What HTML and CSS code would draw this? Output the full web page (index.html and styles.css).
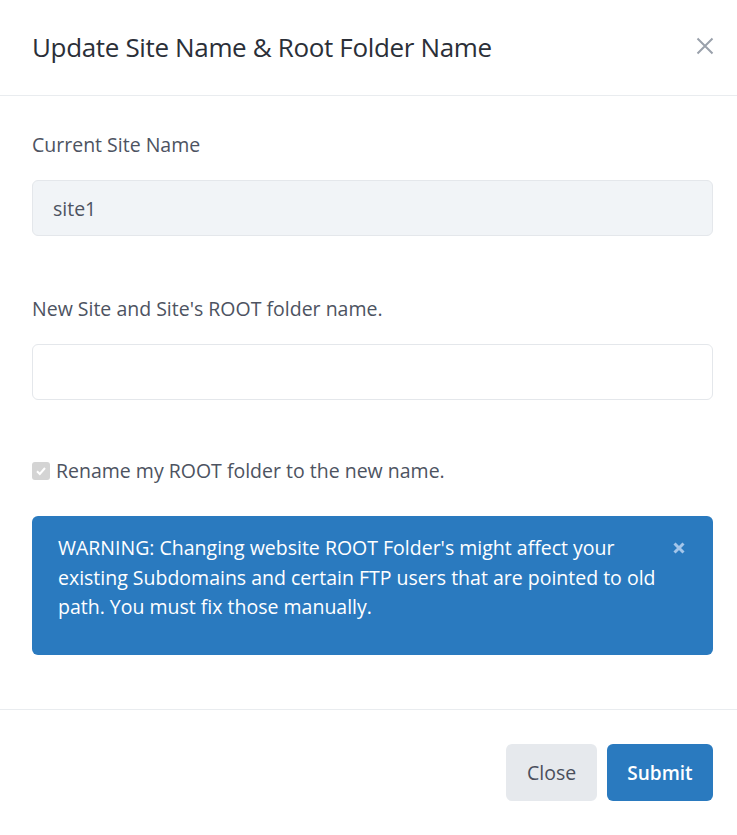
FILE: index.html
```html
<!DOCTYPE html>
<html>
<head>
<meta charset="utf-8">
<link rel="stylesheet" href="styles.css">
</head>
<body>
<div class="modal">
  <div class="modal-header">
    <h1 class="title">Update Site Name &amp; Root Folder Name</h1>
    <button class="close-x" aria-label="Close">
      <svg width="18" height="18" viewBox="0 0 18 18"><path d="M1.5 1.5L16.5 16.5M16.5 1.5L1.5 16.5" stroke="#9aa1ab" stroke-width="2" fill="none"/></svg>
    </button>
  </div>
  <div class="modal-body">
    <div class="group">
      <label class="label">Current Site Name</label>
      <div class="input readonly">site1</div>
    </div>
    <div class="group">
      <label class="label">New Site and Site's ROOT folder name.</label>
      <div class="input"></div>
    </div>
    <div class="check-row">
      <span class="checkbox">
        <svg width="12" height="12" viewBox="0 0 12 12"><path d="M2 6.2L4.8 9L10 3" stroke="#ffffff" stroke-width="2" fill="none"/></svg>
      </span>
      <span class="check-label">Rename my ROOT folder to the new name.</span>
    </div>
    <div class="alert">
      <p class="alert-text">WARNING: Changing website ROOT Folder's might affect your existing Subdomains and certain FTP users that are pointed to old path. You must fix those manually.</p>
      <span class="alert-close" aria-label="Dismiss">
        <svg width="12" height="12" viewBox="0 0 12 12"><path d="M1.5 1.5L10.5 10.5M10.5 1.5L1.5 10.5" stroke="#a4c6ea" stroke-width="3" fill="none"/></svg>
      </span>
    </div>
  </div>
  <div class="modal-footer">
    <button class="btn btn-light">Close</button>
    <button class="btn btn-primary">Submit</button>
  </div>
</div>
</body>
</html>
```
FILE: styles.css
```css
* { box-sizing: border-box; }
html, body { margin: 0; padding: 0; background: #ffffff; }
body { font-family: "Open Sans", "Liberation Sans", sans-serif; color: #4a4f5c; }
.modal { width: 737px; }
.modal-header {
  height: 96px;
  padding: 0 23px 0 32px;
  display: flex;
  align-items: center;
  justify-content: space-between;
  border-bottom: 1px solid #e9ecef;
}
.title { margin: 0; font-weight: 400; font-size: 26px; line-height: 34px; color: #2b2f38; letter-spacing: -0.35px; margin-top: -2px; }
.close-x { border: 0; background: none; padding: 0; width: 18px; height: 18px; margin-top: -3px; display: flex; }
.modal-body { padding: 35px 24px 0 32px; }
.group { margin-bottom: 59px; }
.label { display: block; font-size: 19.5px; line-height: 28px; color: #4d5361; margin-bottom: 21px; }
.input {
  height: 56px;
  border: 1px solid #e4e7eb;
  border-radius: 6px;
  padding: 0 20px;
  display: flex;
  align-items: center;
  font-size: 19.5px;
  color: #4d5361;
  background: #fff;
}
.input.readonly { background: #f1f4f7; }
.check-row { display: flex; align-items: center; gap: 6px; height: 28px; margin-top: -2px; }
.checkbox {
  width: 18px; height: 18px; border-radius: 3px; background: #d4d4d4;
  display: flex; align-items: center; justify-content: center;
}
.check-label { font-size: 19.5px; line-height: 28px; color: #4d5361; }
.alert {
  margin-top: 31px;
  background: #2a7abf;
  border-radius: 6px;
  height: 139px;
  padding: 17px 28px 0 26px;
  display: flex;
  justify-content: space-between;
  align-items: flex-start;
}
.alert-text { margin: 0; color: #ffffff; font-size: 19.5px; line-height: 29.5px; width: 600px; }
.alert-close { display: flex; margin-top: 9px; }
.modal-footer {
  margin-top: 54px;
  border-top: 1px solid #e9ecef;
  padding: 34px 24px 0 0;
  display: flex;
  justify-content: flex-end;
  gap: 10px;
}
.btn {
  height: 57px; border: 0; border-radius: 6px; font-family: inherit; font-size: 19.5px; padding: 0 21px;
}
.btn-light { background: #e6e9ed; color: #4a4f5c; width: 91px; }
.btn-primary { background: #2a7abf; color: #ffffff; font-weight: 600; font-size: 19px; width: 106px; padding: 0; }
```
